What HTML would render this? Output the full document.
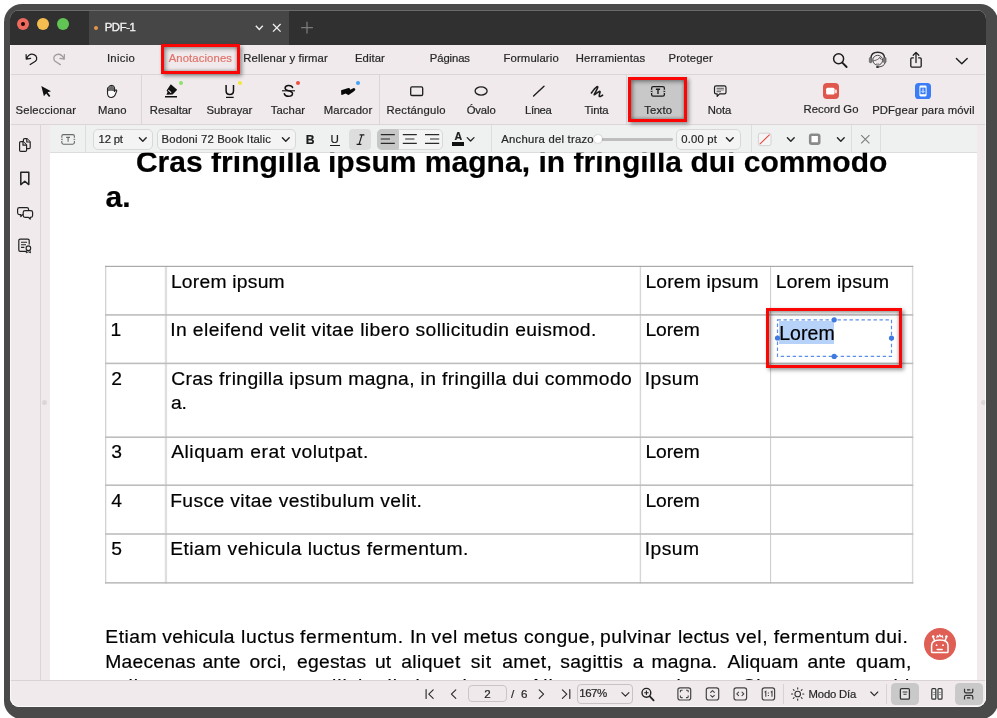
<!DOCTYPE html>
<html>
<head>
<meta charset="utf-8">
<title>PDF-1</title>
<style>
*{box-sizing:border-box;margin:0;padding:0}
html,body{width:997px;height:718px;overflow:hidden;background:#fff}
body{font-family:"Liberation Sans",sans-serif;position:relative;color:#222}
.a{position:absolute}
svg{position:absolute;overflow:visible}
#frame{position:absolute;left:4px;top:4px;width:993.5px;height:714.5px;background:#4a4a4a;border-radius:18px 18px 17px 18px}
#win{position:absolute;left:10px;top:10px;width:976px;height:697px;background:#f0eaec;border-radius:9px;overflow:hidden;will-change:transform}
.tl{position:absolute;top:8px;width:12px;height:12px;border-radius:50%}
.hl{position:absolute;height:1px;background:#dcd5d8}
.vs{position:absolute;width:1px;background:#dcd5d8}
.t{position:absolute;white-space:nowrap;line-height:1;color:#262626;-webkit-text-stroke:0.2px}
.box{position:absolute;border:1px solid #d8d8d8;border-radius:5px;background:#f3f4f3}
.dot{position:absolute;width:4.4px;height:4.4px;border-radius:50%}
.tb{position:absolute;background:#b9b9b9}
.redbox{position:absolute;border:3px solid #fb0505;box-shadow:2px 2px 4px rgba(0,0,0,.42), inset 1.5px 1.5px 4px rgba(0,0,0,.45), inset -1px -1px 3px rgba(0,0,0,.18)}
</style>
</head>
<body>
<div id="frame"></div>
<div id="win"><div class="a" id="o" style="left:-10px;top:-10px;width:997px;height:718px">
<!-- title bar -->
<div class="a" style="left:10px;top:10px;width:976px;height:35px;background:#303030;border-top:1px solid #6a6a6a"></div>
<div class="a" style="left:88.5px;top:11px;width:200.5px;height:34px;background:#464646"></div>
<div class="tl" style="left:17px;top:18px;background:#ee6a5f"></div>
<div class="a" style="left:21px;top:22px;width:4px;height:4px;border-radius:50%;background:#1a0606"></div>
<div class="tl" style="left:37px;top:18px;background:#f5bd4f"></div>
<div class="tl" style="left:57px;top:18px;background:#61c454"></div>
<div class="a" style="left:94.2px;top:25.5px;width:4.2px;height:4.2px;border-radius:50%;background:#e8954a"></div>
<svg style="left:255px;top:24px" width="9" height="8" viewBox="0 0 9 8"><path d="M0.8 1.8 L4.3 5.4 L7.8 1.8" fill="none" stroke="#f0f0f0" stroke-width="1.4"/></svg>
<svg style="left:272px;top:23px" width="10" height="10" viewBox="0 0 10 10"><path d="M1 1 L8.6 8.6 M8.6 1 L1 8.6" fill="none" stroke="#f0f0f0" stroke-width="1.3"/></svg>
<svg style="left:300px;top:21px" width="14" height="14" viewBox="0 0 14 14"><path d="M7 0.8 V12.6 M1.1 6.7 H12.9" fill="none" stroke="#7a7a7a" stroke-width="1.3"/></svg>
<!-- menu bar -->
<div class="hl" style="left:10px;top:74px;width:976px"></div>
<svg style="left:24px;top:52px" width="15" height="15" viewBox="24 52 15 15"><path d="M26.6 58.8 C28.2 55.2 31.2 53.6 34 54.6 C37 55.7 37.6 59.2 35.4 61.2 L30.2 64.6 M26.1 54.6 L26.3 59.2 L30.6 58.4" fill="none" stroke="#1d1d1d" stroke-width="1.25" stroke-linecap="round" stroke-linejoin="round"/></svg>
<svg style="left:52px;top:52px" width="15" height="15" viewBox="52 52 15 15"><path d="M63.9 58.8 C62.3 55.2 59.3 53.6 56.5 54.6 C53.5 55.7 52.9 59.2 55.1 61.2 L60.3 64.6 M64.4 54.6 L64.2 59.2 L59.9 58.4" fill="none" stroke="#a09c9d" stroke-width="1.3" stroke-linecap="round" stroke-linejoin="round"/></svg>
<!-- menu right icons -->
<svg style="left:832px;top:52px" width="17" height="17" viewBox="832 52 17 17"><circle cx="838.6" cy="58.8" r="5" fill="none" stroke="#1d1d1d" stroke-width="1.5"/><path d="M842.3 62.6 L846.6 67" stroke="#1d1d1d" stroke-width="1.9" stroke-linecap="round"/></svg>
<svg style="left:864px;top:48px" width="28" height="24" viewBox="864 48 28 24"><path d="M870.9 58 C871.2 54.2 874 52.3 877.7 52.3 C881.4 52.3 884.3 54.2 884.6 58" stroke="#2a2a2a" stroke-width="1.4" fill="none"/><circle cx="877.7" cy="60.2" r="4.9" stroke="#3a3a3a" stroke-width="0.9" fill="none"/><path d="M873 61 C875.4 60.4 877.6 59.6 878.6 58.9 L879.7 57.3 L881.4 59.8" stroke="#3a3a3a" stroke-width="0.8" fill="none"/><rect x="869.3" y="57.4" width="2.6" height="5.4" rx="1.2" fill="#7a7a7a" stroke="#3a3a3a" stroke-width="0.5"/><rect x="883.5" y="57.4" width="2.6" height="5.4" rx="1.2" fill="#7a7a7a" stroke="#3a3a3a" stroke-width="0.5"/><path d="M885 62.8 C884.6 65.2 882 66.7 879 66.9" stroke="#333" stroke-width="0.9" fill="none"/><ellipse cx="877.6" cy="67" rx="1.6" ry="1.1" fill="#2a2a2a"/><path d="M876.3 63.6 Q877.7 64.4 879.1 63.6" stroke="#777" stroke-width="0.7" fill="none"/></svg>
<svg style="left:909px;top:51px" width="14" height="18" viewBox="909 51 14 18"><path d="M913.4 57.8 H911.9 Q910.8 57.8 910.8 58.9 V66 Q910.8 67.1 911.9 67.1 H920.1 Q921.2 67.1 921.2 66 V58.9 Q921.2 57.8 920.1 57.8 H918.6 M916 52.6 V62.6 M913.2 55.2 L916 52.4 L918.8 55.2" fill="none" stroke="#1d1d1d" stroke-width="1.3" stroke-linecap="round" stroke-linejoin="round"/></svg>
<svg style="left:955px;top:57px" width="14" height="9" viewBox="955 57 14 9"><path d="M956.4 58.6 L961.8 63.8 L967.2 58.6" fill="none" stroke="#1d1d1d" stroke-width="1.4" stroke-linecap="round" stroke-linejoin="round"/></svg>
<!-- toolbar -->
<div class="hl" style="left:10px;top:124px;width:976px"></div>
<div class="vs" style="left:141px;top:75px;height:49px"></div>
<div class="vs" style="left:379px;top:75px;height:49px"></div>
<div class="vs" style="left:626px;top:75px;height:49px"></div>
<!-- texto selected -->
<div class="a" style="left:629px;top:78px;width:57px;height:43px;background:#c8c8c8"></div>
<!-- cursor -->
<svg style="left:40px;top:85px" width="12" height="13" viewBox="40 85 12 13"><path d="M41.3 86 L43.9 96.2 L46.2 93.4 L49 97 L50.4 95.9 L47.6 92.3 L51 91.2 Z" fill="#111"/></svg>
<!-- hand -->
<svg style="left:106px;top:84px" width="12" height="15" viewBox="106 84 12 15"><path d="M107.5 88.8 Q107.5 87.5 108.6 87.2 L109.5 86.3 Q110.2 85.5 111 85.7 Q111.6 85.1 112.4 85.5 Q113.3 85.5 113.7 86.4 Q114.5 86.8 114.5 87.9 V91.4 L115.4 90.2 Q116.1 89.5 116.6 90.2 Q116.9 90.9 116.4 91.8 L115.4 94.4 Q114.2 97.5 111.4 97.5 Q107.5 97.5 107.5 93 Z" fill="#fbfbfb" stroke="#222" stroke-width="1.1" stroke-linejoin="round"/><path d="M108 91.2 V88.6 Q108 87.8 109 87.5 L110 86.4 L111.2 86 L112.4 85.9 L113.4 86.6 L114 87.8 V91.2 Q111 90.4 108 91.2 Z" fill="#6a6a6a"/></svg>
<!-- highlighter -->
<svg style="left:164px;top:83px" width="15" height="15" viewBox="164 83 15 15"><path d="M170.8 84.2 L177.2 89.8 L172.6 94.6 L166.4 94.8 L167.6 92 L166.6 90.6 Z" fill="#111"/><path d="M168.6 90.4 L170.8 92.4" stroke="#f0eaec" stroke-width="1.1" stroke-linecap="round"/><path d="M165 96.7 H177" stroke="#111" stroke-width="1.5"/></svg>
<div class="dot" style="left:179.1px;top:80.8px;background:#8be36b"></div>
<!-- underline -->
<svg style="left:224px;top:84px" width="12" height="15" viewBox="224 84 12 15"><path d="M226.1 85 V90.8 Q226.1 94.6 229.8 94.6 Q233.5 94.6 233.5 90.8 V85" fill="none" stroke="#111" stroke-width="1.5"/><path d="M226 97.3 H233.7" stroke="#111" stroke-width="1.3"/></svg>
<div class="dot" style="left:237.5px;top:80.8px;background:#f5e63c"></div>
<!-- strike -->
<svg style="left:281px;top:84px" width="15" height="14" viewBox="281 84 15 14"><path d="M292.6 87.6 Q292 85.4 288.6 85.5 Q285 85.7 285.1 88.2 Q285.2 90 288.6 90.8 Q292.6 91.6 292.5 93.8 Q292.4 96.3 288.6 96.3 Q284.9 96.3 284.3 93.8" fill="none" stroke="#111" stroke-width="1.5" stroke-linecap="round"/><path d="M282 90.8 H295" stroke="#111" stroke-width="1.1"/></svg>
<div class="dot" style="left:295.8px;top:80.8px;background:#ee4f43"></div>
<!-- marker -->
<svg style="left:340px;top:87px" width="16" height="9" viewBox="340 87 16 9"><path d="M341.1 90.3 L347.6 88.3 Q349 87.8 349.9 88.4 L350.2 89.8 L353.8 88.1 Q355.2 88.2 355.4 89.6 Q355.2 90.6 353.4 91.8 L349 94.8 Q347.8 95.2 347 94.2 L345.6 93.4 L342 94.9 Q341.2 95 341.2 94 Z" fill="#080808"/></svg>
<div class="dot" style="left:355.85px;top:81px;background:#3fa2f7"></div>
<!-- rectangle -->
<svg style="left:409px;top:85px" width="16" height="12" viewBox="409 85 16 12"><rect x="410.7" y="86.9" width="12" height="8.6" rx="1.3" fill="none" stroke="#1d1d1d" stroke-width="1.3"/></svg>
<!-- oval -->
<svg style="left:473px;top:85px" width="16" height="12" viewBox="473 85 16 12"><ellipse cx="481.1" cy="91" rx="6" ry="4.1" fill="none" stroke="#1d1d1d" stroke-width="1.3"/></svg>
<!-- line -->
<svg style="left:532px;top:85px" width="13" height="12" viewBox="532 85 13 12"><path d="M533.6 96 L544 86.2" stroke="#1d1d1d" stroke-width="1.4" stroke-linecap="round"/></svg>
<!-- ink -->
<svg style="left:590px;top:85px" width="14" height="13" viewBox="590 85 14 13"><path d="M591.4 93 Q594.6 88.2 596.8 86.8 Q598.2 86.2 597.6 87.8 Q596.4 91 594.6 93.6 Q593.6 95.2 595 94.4 Q597.6 92.2 599.4 91.4 Q600.4 91.2 600 92.4 Q599.2 94.6 599.2 96 Q599.4 96.8 600.6 96.4 L602.6 95.2" fill="none" stroke="#1d1d1d" stroke-width="1.6" stroke-linecap="round" stroke-linejoin="round"/></svg>
<!-- text box icon (toolbar) -->
<svg style="left:650px;top:85px" width="16" height="13" viewBox="650 85 16 13"><rect x="651.6" y="86.6" width="12.8" height="9.6" rx="1.6" fill="none" stroke="#1d1d1d" stroke-width="1.3"/><path d="M651.6 89.8 V93 M664.4 89.8 V93" stroke="#c8c8c8" stroke-width="1.8"/><path d="M650.8 91.4 H652.4 M663.6 91.4 H665.2" stroke="#1d1d1d" stroke-width="1"/><path d="M655.9 89.2 H660.1 M658 89.2 V94" stroke="#1d1d1d" stroke-width="1.4"/></svg>
<!-- note -->
<svg style="left:713px;top:84px" width="15" height="14" viewBox="713 84 15 14"><path d="M716 85.9 H724.4 Q726 85.9 726 87.5 V92.3 Q726 93.9 724.4 93.9 H719.6 L717.2 96.4 V93.9 H716 Q714.5 93.9 714.5 92.3 V87.5 Q714.5 85.9 716 85.9 Z" fill="none" stroke="#1d1d1d" stroke-width="1.2" stroke-linejoin="round"/><path d="M716.6 88.4 H723.9 M716.6 90 H723.9 M716.6 91.6 H721" stroke="#777" stroke-width="1.1"/></svg>
<!-- record go -->
<svg style="left:823px;top:83px" width="16" height="16" viewBox="0 0 16 16"><rect x="0" y="0" width="16" height="16" rx="4" fill="#e0574e"/><rect x="3.1" y="4.8" width="8.5" height="6.8" rx="1.5" fill="#fff"/><rect x="12.2" y="6.4" width="1.5" height="3.8" rx="0.5" fill="#fff"/></svg>
<!-- pdfgear mobile -->
<svg style="left:915px;top:83.4px" width="16" height="16" viewBox="0 0 16 16"><rect x="0" y="0" width="16" height="16" rx="3.6" fill="#3b7df6"/><rect x="4.4" y="2.6" width="7.2" height="10.8" rx="1.3" fill="#fff"/><rect x="5.4" y="4.6" width="5.2" height="6.6" fill="#3b7df6"/><path d="M8 5.6 V9.4 M6.6 8.2 L8 9.6 L9.4 8.2" stroke="#fff" stroke-width="0.9" fill="none"/></svg>

<!-- left sidebar -->
<div class="vs" style="left:40px;top:125px;height:556px"></div>
<!-- sidebar icons -->
<svg style="left:18px;top:137px" width="14" height="16" viewBox="18 137 14 16"><g fill="#f0eaec" stroke="#222" stroke-width="1.2" stroke-linejoin="round"><path d="M23.4 139.8 Q23.4 138.6 24.6 138.6 H27 L30.2 141.8 V147.4 Q30.2 148.6 29 148.6 H24.6 Q23.4 148.6 23.4 147.4 Z"/><path d="M26.8 138.8 V142 H30"/><path d="M19.6 142.8 Q19.6 141.6 20.8 141.6 H23.2 L26.6 145 V150.2 Q26.6 151.4 25.4 151.4 H20.8 Q19.6 151.4 19.6 150.2 Z"/><path d="M23 141.8 V145.2 H26.4"/></g></svg>
<svg style="left:19px;top:170px" width="12" height="17" viewBox="19 170 12 17"><path d="M20.8 172.2 H28.8 V184.6 L24.8 181.2 L20.8 184.6 Z" fill="none" stroke="#222" stroke-width="1.5" stroke-linejoin="round"/></svg>
<svg style="left:16px;top:206px" width="18" height="15" viewBox="16 206 18 15"><g fill="#f0eaec" stroke="#222" stroke-width="1.2" stroke-linejoin="round"><path d="M19.4 207.6 H26.8 Q28.6 207.6 28.6 209.4 V212.8 Q28.6 214.6 26.8 214.6 H22.6 L20.8 216.6 V214.6 H19.4 Q17.6 214.6 17.6 212.8 V209.4 Q17.6 207.6 19.4 207.6 Z"/><path d="M25 210.6 H30.8 Q32.6 210.6 32.6 212.4 V215.6 Q32.6 217.4 30.8 217.4 H30.2 V219.2 L28.4 217.4 H25 Q23.2 217.4 23.2 215.6 V212.4 Q23.2 210.6 25 210.6 Z"/></g></svg>
<svg style="left:17px;top:238px" width="16" height="16" viewBox="17 238 16 16"><path d="M26.4 251.4 H20.2 Q18.8 251.4 18.8 250 V240.6 Q18.8 239.2 20.2 239.2 H27.8 Q29.2 239.2 29.2 240.6 V244.6" fill="none" stroke="#222" stroke-width="1.2"/><path d="M21 242.2 H27 M21 244.8 H26 M21 247.4 H24.4" stroke="#222" stroke-width="1.1"/><circle cx="28.4" cy="248.2" r="2.3" fill="#f0eaec" stroke="#222" stroke-width="1.1"/><path d="M27 250.2 L26.2 252.8 L28.4 251.8 L30.6 252.8 L29.8 250.2" fill="none" stroke="#222" stroke-width="1" stroke-linejoin="round"/></svg>
<!-- resize handles -->
<div class="a" style="left:41.5px;top:399.5px;width:5px;height:5px;border-radius:50%;background:#ddd6d9"></div>
<div class="a" style="left:980.5px;top:399.5px;width:5px;height:5px;border-radius:50%;background:#ddd6d9"></div>

<!-- sub toolbar -->
<div class="a" style="left:50px;top:125px;width:927px;height:27px;background:#eff1f0"></div>
<!-- text box small icon -->
<svg style="left:60px;top:133px" width="16" height="13" viewBox="60 133 16 13"><rect x="61.8" y="134.6" width="12.6" height="9.6" rx="1.6" fill="none" stroke="#6a6a6a" stroke-width="1.1"/><path d="M61.8 137.8 V141 M74.4 137.8 V141" stroke="#eff1f0" stroke-width="1.6"/><path d="M61 139.4 H62.6 M73.6 139.4 H75.2" stroke="#6a6a6a" stroke-width="0.9"/><path d="M66.2 137.4 H70 M68.1 137.4 V141.8" stroke="#6a6a6a" stroke-width="1.1"/></svg>
<div class="vs" style="left:85px;top:125px;height:28px;background:#dcdedd"></div>
<div class="box" style="left:93px;top:128.5px;width:60px;height:21px"></div>
<svg style="left:138px;top:136px" width="10" height="7" viewBox="138 136 10 7"><path d="M139.4 137.8 L142.8 141.2 L146.2 137.8" fill="none" stroke="#222" stroke-width="1.4" stroke-linecap="round" stroke-linejoin="round"/></svg>
<div class="box" style="left:156.5px;top:128.5px;width:139px;height:21px"></div>
<svg style="left:281px;top:136px" width="10" height="7" viewBox="281 136 10 7"><path d="M282.4 137.8 L285.8 141.2 L289.2 137.8" fill="none" stroke="#222" stroke-width="1.4" stroke-linecap="round" stroke-linejoin="round"/></svg>
<!-- U underline -->
<div class="a" style="left:329.6px;top:145px;width:10.6px;height:1px;background:#1d1d1d"></div>
<!-- italic selected -->
<div class="a" style="left:349.4px;top:128.5px;width:21.4px;height:21px;border-radius:4px;background:#dcdddc"></div>
<svg style="left:355px;top:133px" width="11" height="13" viewBox="355 133 11 13"><path d="M359.6 134.9 H364.4 M356.6 144.4 H361.4 M362 134.9 L359 144.4" stroke="#1d1d1d" stroke-width="1.2" fill="none"/></svg>
<!-- align group -->
<div class="box" style="left:377px;top:128.5px;width:65.6px;height:21px;background:#f3f4f3"></div>
<div class="a" style="left:377px;top:128.5px;width:21.6px;height:21px;border-radius:5px 2px 2px 5px;background:#c6c7c6"></div>
<svg style="left:378px;top:131px" width="64" height="16" viewBox="378 131 64 16"><g stroke="#2a2a2a" stroke-width="1.2"><path d="M380.8 134.6 H394.8 M380.8 139 H390 M380.8 143.4 H394.8"/><path d="M402.8 134.6 H416.8 M405.2 139 H414.4 M402.8 143.4 H416.8"/><path d="M425 134.6 H439.2 M430 139 H439.2 M425 143.4 H439.2"/></g></svg>
<!-- font color -->
<div class="a" style="left:451.8px;top:142px;width:12.6px;height:3.6px;background:#111"></div>
<svg style="left:466px;top:136px" width="10" height="7" viewBox="466 136 10 7"><path d="M467.2 137.6 L470.6 141 L474 137.6" fill="none" stroke="#222" stroke-width="1.3" stroke-linecap="round" stroke-linejoin="round"/></svg>
<div class="vs" style="left:490.5px;top:125px;height:28px;background:#dcdedd"></div>
<!-- slider -->
<div class="a" style="left:600px;top:137.8px;width:73px;height:2.8px;border-radius:1.4px;background:#bdbebd"></div>
<div class="a" style="left:594px;top:135px;width:8.4px;height:8.4px;border-radius:50%;background:#fff;box-shadow:0 0 1.5px rgba(0,0,0,.35)"></div>
<div class="box" style="left:675.5px;top:128.5px;width:65px;height:21px"></div>
<svg style="left:725px;top:136px" width="10" height="7" viewBox="725 136 10 7"><path d="M726.4 137.8 L729.8 141.2 L733.2 137.8" fill="none" stroke="#222" stroke-width="1.4" stroke-linecap="round" stroke-linejoin="round"/></svg>
<div class="vs" style="left:750.5px;top:125px;height:28px;background:#dcdedd"></div>
<!-- no fill -->
<svg style="left:757px;top:132px" width="15" height="15" viewBox="757 132 15 15"><rect x="758.4" y="133.2" width="12.6" height="12.4" rx="2" fill="#f5f5f5" stroke="#d2d2d2" stroke-width="1"/><path d="M759.8 144.2 L769.6 134.6" stroke="#e8463c" stroke-width="1.1"/></svg>
<svg style="left:786px;top:136px" width="10" height="7" viewBox="786 136 10 7"><path d="M787.4 137.8 L790.8 141.2 L794.2 137.8" fill="none" stroke="#222" stroke-width="1.4" stroke-linecap="round" stroke-linejoin="round"/></svg>
<svg style="left:808px;top:133px" width="14" height="13" viewBox="808 133 14 13"><rect x="810.2" y="134.8" width="9" height="8.8" rx="1.4" fill="#fff" stroke="#8a8a8a" stroke-width="2.6"/></svg>
<svg style="left:836px;top:136px" width="10" height="7" viewBox="836 136 10 7"><path d="M837.4 137.8 L840.8 141.2 L844.2 137.8" fill="none" stroke="#222" stroke-width="1.4" stroke-linecap="round" stroke-linejoin="round"/></svg>
<div class="vs" style="left:851px;top:125px;height:28px;background:#dcdedd"></div>
<svg style="left:860px;top:134px" width="11" height="11" viewBox="860 134 11 11"><path d="M861.2 135.2 L869.4 143.4 M869.4 135.2 L861.2 143.4" stroke="#7a7a7a" stroke-width="1.1"/></svg>
<div class="vs" style="left:880px;top:125px;height:28px;background:#dcdedd"></div>

<!-- page -->
<div class="a" id="page" style="left:50px;top:152px;width:927px;height:529px;background:#fff;overflow:hidden"><div class="a" style="left:-50px;top:-152px;width:997px;height:718px">
<!-- table lines -->
<svg style="left:100px;top:260px" width="820" height="330" viewBox="100 260 820 330"><rect x="105" y="265.8" width="1.3" height="317.8" fill="#d2d2d2"/><rect x="164.8" y="265.8" width="2.3" height="317.8" fill="#dedede"/><rect x="639.7" y="265.8" width="1.4" height="317.8" fill="#d6d6d6"/><rect x="770" y="265.8" width="1.1" height="317.8" fill="#cfcfcf"/><rect x="911.9" y="265.8" width="1.4" height="317.8" fill="#d8d8d8"/><rect x="105" y="265.8" width="808.3" height="1.2" fill="#a9a9a9"/><rect x="105" y="314.1" width="808.3" height="1.6" fill="#bdbdbd"/><rect x="105" y="362.6" width="808.3" height="1.6" fill="#bdbdbd"/><rect x="105" y="436.4" width="808.3" height="1.6" fill="#bdbdbd"/><rect x="105" y="484.4" width="808.3" height="1.6" fill="#bdbdbd"/><rect x="105" y="533.2" width="808.3" height="1.6" fill="#bdbdbd"/><rect x="105" y="582.1" width="808.3" height="1.5" fill="#b8b8b8"/></svg>
<!-- text box selection -->
<div class="a" style="left:779px;top:320.7px;width:55.2px;height:23.3px;background:#b7d2f8"></div>
<svg style="left:770px;top:312px" width="130" height="52" viewBox="770 312 130 52"><rect x="777.5" y="319.8" width="114" height="36.6" fill="none" stroke="#5b8ee8" stroke-width="1.2" stroke-dasharray="3.4 2.6"/><g fill="#3f7ae0"><circle cx="834.2" cy="319.8" r="2.6"/><circle cx="834.2" cy="356.4" r="2.6"/><circle cx="777.5" cy="338" r="2.6"/><circle cx="891.5" cy="338" r="2.6"/></g></svg>
<!-- floating assistant button -->
<div class="a" style="left:923.8px;top:627.8px;width:32.2px;height:32.2px;border-radius:50%;background:#df5f55"></div>
<svg style="left:928px;top:632px" width="24" height="24" viewBox="928 632 24 24"><g fill="none" stroke="#fff" stroke-width="1.5" stroke-linecap="round" stroke-linejoin="round"><path d="M931.6 651.8 V645.6 C931.6 642.2 934.4 640 939.8 640 C945.2 640 948 642.2 948 645.6 V651.8 Q948 652.6 947.2 652.6 H932.4 Q931.6 652.6 931.6 651.8 Z"/><path d="M937.2 649.6 H942.2"/><path d="M934.6 640.6 L933.4 637.8 M945 640.6 L946.2 637.8"/><path d="M936.8 637.8 L937.3 635.6 L938.7 636.8 L939.8 634.8 L940.9 636.8 L942.3 635.6 L942.8 637.8" stroke-width="1.1"/></g><g fill="#fff"><circle cx="933.2" cy="636.6" r="1.3"/><circle cx="946.4" cy="636.6" r="1.3"/><circle cx="936.6" cy="645.2" r="0.9"/><circle cx="943" cy="645.2" r="0.9"/></g></svg>

<span class="t" style="left:135.90px;top:147px;font-size:30px;letter-spacing:0.026px;font-weight:700;color:#000">Cras fringilla ipsum magna, in fringilla dui commodo</span>
<span class="t" style="left:105.60px;top:182px;font-size:30px;letter-spacing:-0.085px;font-weight:700;color:#000">a.</span>
<span class="t" style="left:170.90px;top:272px;font-size:19.3px;letter-spacing:0.232px;color:#000;transform:scaleY(0.96);transform-origin:0 16px">Lorem ipsum</span>
<span class="t" style="left:645.40px;top:272px;font-size:19.3px;letter-spacing:0.172px;color:#000;transform:scaleY(0.96);transform-origin:0 16px">Lorem ipsum</span>
<span class="t" style="left:775.80px;top:272px;font-size:19.3px;letter-spacing:0.182px;color:#000;transform:scaleY(0.96);transform-origin:0 16px">Lorem ipsum</span>
<span class="t" style="left:110.60px;top:320px;font-size:19.3px;color:#000;transform:scaleY(0.96);transform-origin:0 16px">1</span>
<span class="t" style="left:170.20px;top:320px;font-size:19.3px;letter-spacing:0.412px;color:#000;transform:scaleY(0.96);transform-origin:0 16px">In eleifend velit vitae libero sollicitudin euismod.</span>
<span class="t" style="left:645.40px;top:320px;font-size:19.3px;letter-spacing:-0.073px;color:#000;transform:scaleY(0.96);transform-origin:0 16px">Lorem</span>
<span class="t" style="left:111.20px;top:369px;font-size:19.3px;color:#000;transform:scaleY(0.96);transform-origin:0 16px">2</span>
<span class="t" style="left:171.20px;top:369px;font-size:19.3px;letter-spacing:0.373px;color:#000;transform:scaleY(0.96);transform-origin:0 16px">Cras fringilla ipsum magna, in fringilla dui commodo</span>
<span class="t" style="left:170.90px;top:393px;font-size:19.3px;letter-spacing:-0.123px;color:#000;transform:scaleY(0.96);transform-origin:0 16px">a.</span>
<span class="t" style="left:644.70px;top:369px;font-size:19.3px;letter-spacing:0.464px;color:#000;transform:scaleY(0.96);transform-origin:0 16px">Ipsum</span>
<span class="t" style="left:111.20px;top:442px;font-size:19.3px;color:#000;transform:scaleY(0.96);transform-origin:0 16px">3</span>
<span class="t" style="left:171.20px;top:442px;font-size:19.3px;letter-spacing:0.508px;color:#000;transform:scaleY(0.96);transform-origin:0 16px">Aliquam erat volutpat.</span>
<span class="t" style="left:645.40px;top:442px;font-size:19.3px;letter-spacing:-0.073px;color:#000;transform:scaleY(0.96);transform-origin:0 16px">Lorem</span>
<span class="t" style="left:111.20px;top:491px;font-size:19.3px;color:#000;transform:scaleY(0.96);transform-origin:0 16px">4</span>
<span class="t" style="left:170.20px;top:491px;font-size:19.3px;letter-spacing:0.377px;color:#000;transform:scaleY(0.96);transform-origin:0 16px">Fusce vitae vestibulum velit.</span>
<span class="t" style="left:645.40px;top:491px;font-size:19.3px;letter-spacing:-0.073px;color:#000;transform:scaleY(0.96);transform-origin:0 16px">Lorem</span>
<span class="t" style="left:111.20px;top:539px;font-size:19.3px;color:#000;transform:scaleY(0.96);transform-origin:0 16px">5</span>
<span class="t" style="left:170.20px;top:539px;font-size:19.3px;letter-spacing:0.457px;color:#000;transform:scaleY(0.96);transform-origin:0 16px">Etiam vehicula luctus fermentum.</span>
<span class="t" style="left:644.70px;top:539px;font-size:19.3px;letter-spacing:0.464px;color:#000;transform:scaleY(0.96);transform-origin:0 16px">Ipsum</span>
<span class="t" style="left:779.20px;top:324px;font-size:19.5px;letter-spacing:0.068px;color:#000">Lorem</span>
<span class="t" style="left:105.30px;top:627px;font-size:19.3px;letter-spacing:0.519px;color:#000;transform:scaleY(0.96);transform-origin:0 16px">Etiam</span>
<span class="t" style="left:162.30px;top:627px;font-size:19.3px;letter-spacing:0.212px;color:#000;transform:scaleY(0.96);transform-origin:0 16px">vehicula</span>
<span class="t" style="left:241.00px;top:627px;font-size:19.3px;letter-spacing:0.614px;color:#000;transform:scaleY(0.96);transform-origin:0 16px">luctus</span>
<span class="t" style="left:300.00px;top:627px;font-size:19.3px;letter-spacing:0.620px;color:#000;transform:scaleY(0.96);transform-origin:0 16px">fermentum.</span>
<span class="t" style="left:409.90px;top:627px;font-size:19.3px;letter-spacing:0.200px;color:#000;transform:scaleY(0.96);transform-origin:0 16px">In</span>
<span class="t" style="left:431.50px;top:627px;font-size:19.3px;letter-spacing:0.620px;color:#000;transform:scaleY(0.96);transform-origin:0 16px">vel</span>
<span class="t" style="left:463.40px;top:627px;font-size:19.3px;letter-spacing:0.434px;color:#000;transform:scaleY(0.96);transform-origin:0 16px">metus</span>
<span class="t" style="left:524.00px;top:627px;font-size:19.3px;letter-spacing:0.440px;color:#000;transform:scaleY(0.96);transform-origin:0 16px">congue,</span>
<span class="t" style="left:600.10px;top:627px;font-size:19.3px;letter-spacing:0.457px;color:#000;transform:scaleY(0.96);transform-origin:0 16px">pulvinar</span>
<span class="t" style="left:678.00px;top:627px;font-size:19.3px;letter-spacing:0.200px;color:#000;transform:scaleY(0.96);transform-origin:0 16px">lectus</span>
<span class="t" style="left:735.90px;top:627px;font-size:19.3px;letter-spacing:0.551px;color:#000;transform:scaleY(0.96);transform-origin:0 16px">vel,</span>
<span class="t" style="left:773.80px;top:627px;font-size:19.3px;letter-spacing:0.464px;color:#000;transform:scaleY(0.96);transform-origin:0 16px">fermentum</span>
<span class="t" style="left:874.90px;top:627px;font-size:19.3px;letter-spacing:0.620px;color:#000;transform:scaleY(0.96);transform-origin:0 16px">dui.</span>
<span class="t" style="left:105.30px;top:652px;font-size:19.3px;letter-spacing:0.200px;color:#000;transform:scaleY(0.96);transform-origin:0 16px">Maecenas</span>
<span class="t" style="left:202.40px;top:652px;font-size:19.3px;letter-spacing:0.200px;color:#000;transform:scaleY(0.96);transform-origin:0 16px">ante</span>
<span class="t" style="left:249.50px;top:652px;font-size:19.3px;letter-spacing:0.200px;color:#000;transform:scaleY(0.96);transform-origin:0 16px">orci,</span>
<span class="t" style="left:297.10px;top:652px;font-size:19.3px;letter-spacing:0.235px;color:#000;transform:scaleY(0.96);transform-origin:0 16px">egestas</span>
<span class="t" style="left:374.90px;top:652px;font-size:19.3px;letter-spacing:0.200px;color:#000;transform:scaleY(0.96);transform-origin:0 16px">ut</span>
<span class="t" style="left:401.20px;top:652px;font-size:19.3px;letter-spacing:0.390px;color:#000;transform:scaleY(0.96);transform-origin:0 16px">aliquet</span>
<span class="t" style="left:470.70px;top:652px;font-size:19.3px;letter-spacing:0.538px;color:#000;transform:scaleY(0.96);transform-origin:0 16px">sit</span>
<span class="t" style="left:502.30px;top:652px;font-size:19.3px;letter-spacing:0.334px;color:#000;transform:scaleY(0.96);transform-origin:0 16px">amet,</span>
<span class="t" style="left:560.20px;top:652px;font-size:19.3px;letter-spacing:0.376px;color:#000;transform:scaleY(0.96);transform-origin:0 16px">sagittis</span>
<span class="t" style="left:632.70px;top:652px;font-size:19.3px;color:#000;transform:scaleY(0.96);transform-origin:0 16px">a</span>
<span class="t" style="left:651.50px;top:652px;font-size:19.3px;letter-spacing:0.249px;color:#000;transform:scaleY(0.96);transform-origin:0 16px">magna.</span>
<span class="t" style="left:727.50px;top:652px;font-size:19.3px;letter-spacing:0.200px;color:#000;transform:scaleY(0.96);transform-origin:0 16px">Aliquam</span>
<span class="t" style="left:807.50px;top:652px;font-size:19.3px;letter-spacing:0.200px;color:#000;transform:scaleY(0.96);transform-origin:0 16px">ante</span>
<span class="t" style="left:856.00px;top:652px;font-size:19.3px;letter-spacing:0.417px;color:#000;transform:scaleY(0.96);transform-origin:0 16px">quam,</span>
<span class="t" style="left:105.30px;top:676px;font-size:19.3px;letter-spacing:0.868px;color:#000;transform:scaleY(0.96);transform-origin:0 16px">nulla at ex accumsan sollicitudin in ut lectus. Aliquam erat volutpat. Class aptent taciti</span>
</div></div>
<div class="a" style="left:50px;top:152px;width:927px;height:1px;background:rgba(205,208,206,.7)"></div>
<!-- status -->
<div class="a" style="left:10px;top:680px;width:976px;height:27px;border-top:1px solid #d9d3d5;background:#f0eaec"></div>
<svg style="left:425px;top:688px" width="10" height="12" viewBox="425 688 10 12"><path d="M426.1 689.6 V698.5 M433.2 689.8 L428.8 694.05 L433.2 698.3" fill="none" stroke="#2a2a2a" stroke-width="1.15" stroke-linecap="round" stroke-linejoin="round"/></svg>
<svg style="left:449px;top:688px" width="10" height="12" viewBox="449 688 10 12"><path d="M455.8 689.8 L451.4 694.05 L455.8 698.3" fill="none" stroke="#2a2a2a" stroke-width="1.15" stroke-linecap="round" stroke-linejoin="round"/></svg>
<div class="a" style="left:468px;top:685.3px;width:38.8px;height:16.6px;border:1px solid #cbc5c8;border-radius:4px;background:#efe9eb"></div>
<svg style="left:537px;top:688px" width="10" height="12" viewBox="537 688 10 12"><path d="M539.2 689.8 L543.6 694.05 L539.2 698.3" fill="none" stroke="#2a2a2a" stroke-width="1.15" stroke-linecap="round" stroke-linejoin="round"/></svg>
<svg style="left:561px;top:688px" width="10" height="12" viewBox="561 688 10 12"><path d="M562.4 689.8 L566.8 694.05 L562.4 698.3 M569.8 689.6 V698.5" fill="none" stroke="#2a2a2a" stroke-width="1.15" stroke-linecap="round" stroke-linejoin="round"/></svg>
<div class="a" style="left:577.2px;top:683.6px;width:55.6px;height:20px;border:1px solid #c8c1c6;border-radius:4px;background:#f0eaec"></div>
<svg style="left:620px;top:691px" width="11" height="7" viewBox="620 691 11 7"><path d="M621.9 692.6 L625.4 696.1 L628.9 692.6" fill="none" stroke="#2a2a2a" stroke-width="1.15" stroke-linecap="round" stroke-linejoin="round"/></svg>
<!-- zoom in -->
<svg style="left:640px;top:686px" width="16" height="16" viewBox="640 686 16 16"><circle cx="646.4" cy="692.8" r="4.4" fill="none" stroke="#222" stroke-width="1.4"/><path d="M649.8 696.4 L653.6 700.4" stroke="#222" stroke-width="1.8" stroke-linecap="round"/><path d="M644.2 692.8 H648.6 M646.4 690.6 V695" stroke="#222" stroke-width="1.1"/></svg>
<!-- full screen -->
<svg style="left:676px;top:686px" width="17" height="16" viewBox="676 686 17 16"><rect x="677.9" y="687.8" width="12.8" height="12.2" rx="2.2" fill="none" stroke="#444" stroke-width="1.2"/><path d="M680.4 692.2 V691 Q680.4 690.2 681.2 690.2 H682.6 M686 690.2 H687.4 Q688.2 690.2 688.2 691 V692.2 M688.2 695.6 V696.8 Q688.2 697.6 687.4 697.6 H686 M682.6 697.6 H681.2 Q680.4 697.6 680.4 696.8 V695.6" fill="none" stroke="#444" stroke-width="1.1"/></svg>
<!-- fit height -->
<svg style="left:704px;top:686px" width="17" height="16" viewBox="704 686 17 16"><rect x="706.3" y="687.8" width="12.4" height="12.2" rx="2.2" fill="none" stroke="#444" stroke-width="1.2"/><path d="M710.7 692.4 L712.5 690.6 L714.3 692.4 M710.7 695.4 L712.5 697.2 L714.3 695.4" fill="none" stroke="#444" stroke-width="1.1" stroke-linejoin="round" stroke-linecap="round"/></svg>
<!-- fit width -->
<svg style="left:732px;top:686px" width="17" height="16" viewBox="732 686 17 16"><rect x="734" y="687.8" width="12.6" height="12.2" rx="2.2" fill="none" stroke="#444" stroke-width="1.2"/><path d="M738.6 692.1 L736.8 693.9 L738.6 695.7 M742 692.1 L743.8 693.9 L742 695.7" fill="none" stroke="#444" stroke-width="1.1" stroke-linejoin="round" stroke-linecap="round"/></svg>
<!-- 1:1 -->
<svg style="left:760px;top:686px" width="17" height="16" viewBox="760 686 17 16"><rect x="762.2" y="687.8" width="12.4" height="12.2" rx="2.2" fill="none" stroke="#444" stroke-width="1.2"/><path d="M764.6 692.2 L765.8 691.4 V696.8 M770.8 692.2 L772 691.4 V696.8" fill="none" stroke="#444" stroke-width="1.1"/><path d="M768.4 692.6 V693.6 M768.4 695 V696" stroke="#444" stroke-width="1.1"/></svg>
<div class="vs" style="left:782.5px;top:684px;height:20px;background:#d8d2d4"></div>
<!-- sun -->
<svg style="left:790px;top:686px" width="16" height="16" viewBox="790 686 16 16"><circle cx="797.7" cy="694" r="2.8" fill="none" stroke="#333" stroke-width="1.1"/><g stroke="#333" stroke-width="1.1" stroke-linecap="round"><path d="M797.7 687.8 V689 M797.7 699 V700.2 M791.5 694 H792.7 M802.7 694 H803.9 M793.3 689.6 L794.1 690.4 M801.3 697.6 L802.1 698.4 M802.1 689.6 L801.3 690.4 M794.1 697.6 L793.3 698.4"/></g></svg>
<svg style="left:869px;top:690px" width="11" height="8" viewBox="869 690 11 8"><path d="M870.8 692 L874.3 695.6 L877.8 692" fill="none" stroke="#2a2a2a" stroke-width="1.15" stroke-linecap="round" stroke-linejoin="round"/></svg>
<div class="vs" style="left:886px;top:684px;height:20px;background:#d8d2d4"></div>
<!-- view buttons -->
<div class="a" style="left:891px;top:683px;width:28px;height:21.5px;border-radius:4.5px;background:#c9c9c9"></div>
<svg style="left:898px;top:687px" width="14" height="14" viewBox="898 687 14 14"><rect x="900.4" y="688.6" width="9" height="10.6" rx="1.2" fill="#e4e4e4" stroke="#333" stroke-width="1.3"/><path d="M902.6 692 H907.4 M903.4 694.3 H906.6" stroke="#333" stroke-width="1.1"/></svg>
<svg style="left:930px;top:687px" width="14" height="14" viewBox="930 687 14 14"><rect x="931.8" y="688.6" width="4" height="10.6" rx="0.9" fill="#f6f6f6" stroke="#333" stroke-width="1.2"/><rect x="938" y="688.6" width="4" height="10.6" rx="0.9" fill="#f6f6f6" stroke="#333" stroke-width="1.2"/><path d="M932.6 692.4 H935 M932.6 694.6 H935 M938.8 692.4 H941.2 M938.8 694.6 H941.2" stroke="#777" stroke-width="0.8"/></svg>
<div class="a" style="left:955px;top:683px;width:27.6px;height:21.5px;border-radius:4.5px;background:#c9c9c9"></div>
<svg style="left:962px;top:687px" width="14" height="14" viewBox="962 687 14 14"><path d="M964.5 688.7 V691.2 Q964.5 692.8 966.1 692.8 H971.2 Q972.8 692.8 972.8 691.2 V688.7 M967 689.9 H970.3 M964.5 699.6 V697 Q964.5 695.4 966.1 695.4 H971.2 Q972.8 695.4 972.8 697 V699.6 M967 697.9 H970.3" fill="none" stroke="#333" stroke-width="1.2"/></svg>

<span class="t" style="left:104.70px;top:22px;font-size:11.3px;letter-spacing:-0.364px;color:#f2f2f2;-webkit-text-stroke:0.35px #f2f2f2">PDF-1</span>
<span class="t" style="left:106.90px;top:53px;font-size:11.3px;letter-spacing:0.322px">Inicio</span>
<span class="t" style="left:168.70px;top:53px;font-size:11.3px;letter-spacing:0.107px;color:#e0746b">Anotaciones</span>
<span class="t" style="left:243.30px;top:53px;font-size:11.3px;letter-spacing:0.100px">Rellenar y firmar</span>
<span class="t" style="left:355.00px;top:53px;font-size:11.3px;letter-spacing:0.050px">Editar</span>
<span class="t" style="left:429.80px;top:53px;font-size:11.3px;letter-spacing:-0.113px">Páginas</span>
<span class="t" style="left:503.50px;top:53px;font-size:11.3px;letter-spacing:0.133px">Formulario</span>
<span class="t" style="left:575.70px;top:53px;font-size:11.3px;letter-spacing:0.140px">Herramientas</span>
<span class="t" style="left:668.50px;top:53px;font-size:11.3px;letter-spacing:0.133px">Proteger</span>
<span class="t" style="left:15.60px;top:105px;font-size:11.3px;letter-spacing:0.133px">Seleccionar</span>
<span class="t" style="left:97.90px;top:105px;font-size:11.3px;letter-spacing:0.141px">Mano</span>
<span class="t" style="left:149.80px;top:105px;font-size:11.3px">Resaltar</span>
<span class="t" style="left:206.40px;top:105px;font-size:11.3px;letter-spacing:0.018px">Subrayar</span>
<span class="t" style="left:270.80px;top:105px;font-size:11.3px;letter-spacing:0.071px">Tachar</span>
<span class="t" style="left:323.80px;top:105px;font-size:11.3px;letter-spacing:0.107px">Marcador</span>
<span class="t" style="left:386.40px;top:105px;font-size:11.3px;letter-spacing:0.215px">Rectángulo</span>
<span class="t" style="left:466.70px;top:105px;font-size:11.3px;letter-spacing:-0.132px">Óvalo</span>
<span class="t" style="left:525.00px;top:105px;font-size:11.3px;letter-spacing:-0.372px">Línea</span>
<span class="t" style="left:584.50px;top:105px;font-size:11.3px;letter-spacing:-0.153px">Tinta</span>
<span class="t" style="left:644.30px;top:105px;font-size:11.3px;letter-spacing:0.171px">Texto</span>
<span class="t" style="left:707.80px;top:105px;font-size:11.3px;letter-spacing:-0.127px">Nota</span>
<span class="t" style="left:803.60px;top:104px;font-size:11.3px;letter-spacing:0.032px">Record Go</span>
<span class="t" style="left:872.20px;top:105px;font-size:11.3px;letter-spacing:0.109px">PDFgear para móvil</span>
<span class="t" style="left:98.60px;top:134px;font-size:11.3px;letter-spacing:-0.222px">12 pt</span>
<span class="t" style="left:161.60px;top:134px;font-size:11.3px;letter-spacing:0.156px">Bodoni 72 Book Italic</span>
<span class="t" style="left:305.70px;top:134px;font-size:12.2px;font-weight:700;color:#1d1d1d">B</span>
<span class="t" style="left:330.60px;top:133px;font-size:11.6px;color:#1d1d1d">U</span>
<span class="t" style="left:454.40px;top:131px;font-size:10.6px;font-weight:700;color:#1d1d1d">A</span>
<span class="t" style="left:501.30px;top:134px;font-size:11.3px;letter-spacing:0.234px">Anchura del trazo</span>
<span class="t" style="left:681.30px;top:134px;font-size:11.3px;letter-spacing:0.165px">0.00 pt</span>
<span class="t" style="left:484.30px;top:688px;font-size:11.6px">2</span>
<span class="t" style="left:511.00px;top:688px;font-size:11.6px;letter-spacing:1.829px">/ 6</span>
<span class="t" style="left:579.20px;top:688px;font-size:11.5px;letter-spacing:-0.429px">167%</span>
<span class="t" style="left:808.60px;top:689px;font-size:11.3px;letter-spacing:-0.185px">Modo Día</span>
<!-- red annotation boxes -->
<div class="redbox" style="left:161px;top:44px;width:79px;height:30px"></div>
<div class="redbox" style="left:628px;top:77px;width:59px;height:45px"></div>
<div class="redbox" style="left:766px;top:308px;width:136px;height:60px"></div>

<div class="a" style="left:10px;top:45px;width:976px;height:662px;border:1px solid rgba(255,255,255,.75);border-top:none;border-radius:0 0 9px 9px"></div>
</div></div>
</body>
</html>
